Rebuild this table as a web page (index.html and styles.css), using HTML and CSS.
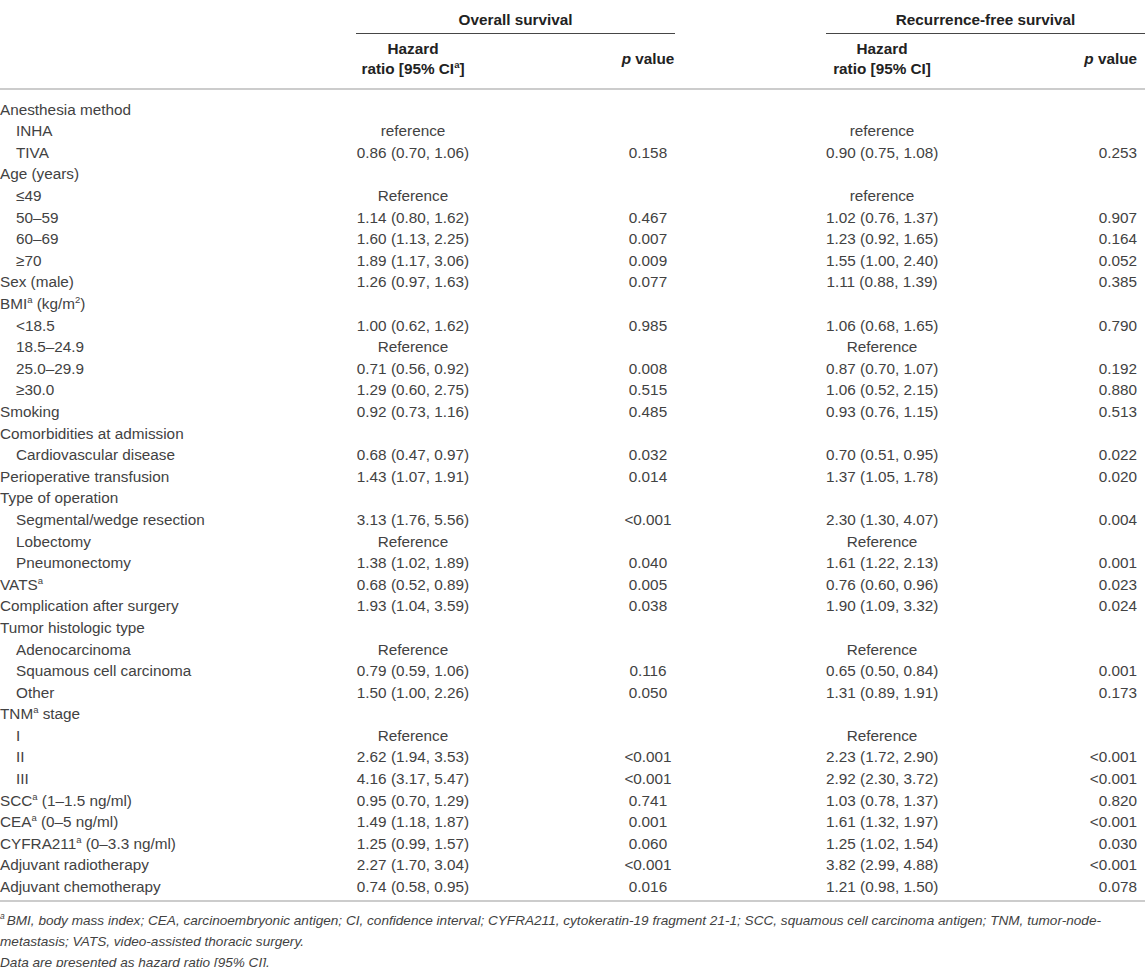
FILE: index.html
```html
<!DOCTYPE html>
<html>
<head>
    <meta charset="utf-8">
    <link rel="stylesheet" href="styles.css">
</head>
<body>
    <div id="content">
        <table class="results">
            <colgroup>
                <col class="col-label">
                <col class="col-hr1">
                <col class="col-p1">
                <col class="col-hr2">
                <col class="col-p2">
            </colgroup>
            <thead>
                <tr class="group-row">
                    <th></th>
                    <th colspan="2"><div class="group-title">Overall survival</div></th>
                    <th colspan="2" class="group-right"><div class="group-title">Recurrence-free survival</div></th>
                </tr>
                <tr class="sub-row">
                    <th></th>
                    <th class="hr">Hazard<br>ratio [95% CI<sup>a</sup>]</th>
                    <th class="p1"><i>p</i> value</th>
                    <th class="hr2">Hazard<br>ratio [95% CI]</th>
                    <th class="p2"><i>p</i> value</th>
                </tr>
            </thead>
            <tbody>
                <tr><td class="label">Anesthesia method</td><td></td><td></td><td></td><td></td></tr>
                <tr><td class="label sub">INHA</td><td class="hr">reference</td><td class="p1"></td><td class="hr2">reference</td><td class="p2"></td></tr>
                <tr><td class="label sub">TIVA</td><td class="hr">0.86 (0.70, 1.06)</td><td class="p1">0.158</td><td class="hr2">0.90 (0.75, 1.08)</td><td class="p2">0.253</td></tr>
                <tr><td class="label">Age (years)</td><td></td><td></td><td></td><td></td></tr>
                <tr><td class="label sub">≤49</td><td class="hr">Reference</td><td class="p1"></td><td class="hr2">reference</td><td class="p2"></td></tr>
                <tr><td class="label sub">50–59</td><td class="hr">1.14 (0.80, 1.62)</td><td class="p1">0.467</td><td class="hr2">1.02 (0.76, 1.37)</td><td class="p2">0.907</td></tr>
                <tr><td class="label sub">60–69</td><td class="hr">1.60 (1.13, 2.25)</td><td class="p1">0.007</td><td class="hr2">1.23 (0.92, 1.65)</td><td class="p2">0.164</td></tr>
                <tr><td class="label sub">≥70</td><td class="hr">1.89 (1.17, 3.06)</td><td class="p1">0.009</td><td class="hr2">1.55 (1.00, 2.40)</td><td class="p2">0.052</td></tr>
                <tr><td class="label">Sex (male)</td><td class="hr">1.26 (0.97, 1.63)</td><td class="p1">0.077</td><td class="hr2">1.11 (0.88, 1.39)</td><td class="p2">0.385</td></tr>
                <tr><td class="label">BMI<sup>a</sup> (kg/m<sup>2</sup>)</td><td></td><td></td><td></td><td></td></tr>
                <tr><td class="label sub">&lt;18.5</td><td class="hr">1.00 (0.62, 1.62)</td><td class="p1">0.985</td><td class="hr2">1.06 (0.68, 1.65)</td><td class="p2">0.790</td></tr>
                <tr><td class="label sub">18.5–24.9</td><td class="hr">Reference</td><td class="p1"></td><td class="hr2">Reference</td><td class="p2"></td></tr>
                <tr><td class="label sub">25.0–29.9</td><td class="hr">0.71 (0.56, 0.92)</td><td class="p1">0.008</td><td class="hr2">0.87 (0.70, 1.07)</td><td class="p2">0.192</td></tr>
                <tr><td class="label sub">≥30.0</td><td class="hr">1.29 (0.60, 2.75)</td><td class="p1">0.515</td><td class="hr2">1.06 (0.52, 2.15)</td><td class="p2">0.880</td></tr>
                <tr><td class="label">Smoking</td><td class="hr">0.92 (0.73, 1.16)</td><td class="p1">0.485</td><td class="hr2">0.93 (0.76, 1.15)</td><td class="p2">0.513</td></tr>
                <tr><td class="label">Comorbidities at admission</td><td></td><td></td><td></td><td></td></tr>
                <tr><td class="label sub">Cardiovascular disease</td><td class="hr">0.68 (0.47, 0.97)</td><td class="p1">0.032</td><td class="hr2">0.70 (0.51, 0.95)</td><td class="p2">0.022</td></tr>
                <tr><td class="label">Perioperative transfusion</td><td class="hr">1.43 (1.07, 1.91)</td><td class="p1">0.014</td><td class="hr2">1.37 (1.05, 1.78)</td><td class="p2">0.020</td></tr>
                <tr><td class="label">Type of operation</td><td></td><td></td><td></td><td></td></tr>
                <tr><td class="label sub">Segmental/wedge resection</td><td class="hr">3.13 (1.76, 5.56)</td><td class="p1">&lt;0.001</td><td class="hr2">2.30 (1.30, 4.07)</td><td class="p2">0.004</td></tr>
                <tr><td class="label sub">Lobectomy</td><td class="hr">Reference</td><td class="p1"></td><td class="hr2">Reference</td><td class="p2"></td></tr>
                <tr><td class="label sub">Pneumonectomy</td><td class="hr">1.38 (1.02, 1.89)</td><td class="p1">0.040</td><td class="hr2">1.61 (1.22, 2.13)</td><td class="p2">0.001</td></tr>
                <tr><td class="label">VATS<sup>a</sup></td><td class="hr">0.68 (0.52, 0.89)</td><td class="p1">0.005</td><td class="hr2">0.76 (0.60, 0.96)</td><td class="p2">0.023</td></tr>
                <tr><td class="label">Complication after surgery</td><td class="hr">1.93 (1.04, 3.59)</td><td class="p1">0.038</td><td class="hr2">1.90 (1.09, 3.32)</td><td class="p2">0.024</td></tr>
                <tr><td class="label">Tumor histologic type</td><td></td><td></td><td></td><td></td></tr>
                <tr><td class="label sub">Adenocarcinoma</td><td class="hr">Reference</td><td class="p1"></td><td class="hr2">Reference</td><td class="p2"></td></tr>
                <tr><td class="label sub">Squamous cell carcinoma</td><td class="hr">0.79 (0.59, 1.06)</td><td class="p1">0.116</td><td class="hr2">0.65 (0.50, 0.84)</td><td class="p2">0.001</td></tr>
                <tr><td class="label sub">Other</td><td class="hr">1.50 (1.00, 2.26)</td><td class="p1">0.050</td><td class="hr2">1.31 (0.89, 1.91)</td><td class="p2">0.173</td></tr>
                <tr><td class="label">TNM<sup>a</sup> stage</td><td></td><td></td><td></td><td></td></tr>
                <tr><td class="label sub">I</td><td class="hr">Reference</td><td class="p1"></td><td class="hr2">Reference</td><td class="p2"></td></tr>
                <tr><td class="label sub">II</td><td class="hr">2.62 (1.94, 3.53)</td><td class="p1">&lt;0.001</td><td class="hr2">2.23 (1.72, 2.90)</td><td class="p2">&lt;0.001</td></tr>
                <tr><td class="label sub">III</td><td class="hr">4.16 (3.17, 5.47)</td><td class="p1">&lt;0.001</td><td class="hr2">2.92 (2.30, 3.72)</td><td class="p2">&lt;0.001</td></tr>
                <tr><td class="label">SCC<sup>a</sup> (1–1.5 ng/ml)</td><td class="hr">0.95 (0.70, 1.29)</td><td class="p1">0.741</td><td class="hr2">1.03 (0.78, 1.37)</td><td class="p2">0.820</td></tr>
                <tr><td class="label">CEA<sup>a</sup> (0–5 ng/ml)</td><td class="hr">1.49 (1.18, 1.87)</td><td class="p1">0.001</td><td class="hr2">1.61 (1.32, 1.97)</td><td class="p2">&lt;0.001</td></tr>
                <tr><td class="label">CYFRA211<sup>a</sup> (0–3.3 ng/ml)</td><td class="hr">1.25 (0.99, 1.57)</td><td class="p1">0.060</td><td class="hr2">1.25 (1.02, 1.54)</td><td class="p2">0.030</td></tr>
                <tr><td class="label">Adjuvant radiotherapy</td><td class="hr">2.27 (1.70, 3.04)</td><td class="p1">&lt;0.001</td><td class="hr2">3.82 (2.99, 4.88)</td><td class="p2">&lt;0.001</td></tr>
                <tr><td class="label">Adjuvant chemotherapy</td><td class="hr">0.74 (0.58, 0.95)</td><td class="p1">0.016</td><td class="hr2">1.21 (0.98, 1.50)</td><td class="p2">0.078</td></tr>
            </tbody>
        </table>
        <div class="notes">
            <p><sup class="note-mark">a</sup>BMI, body mass index; CEA, carcinoembryonic antigen; CI, confidence interval; CYFRA211, cytokeratin-19 fragment 21-1; SCC, squamous cell carcinoma antigen; TNM, tumor-node-metastasis; VATS, video-assisted thoracic surgery.</p>
            <p>Data are presented as hazard ratio [95% CI].</p>
        </div>
    </div>
</body>
</html>
```

FILE: styles.css
```css
body{
    margin: 0;
    background-color: white;
    font-family: "Liberation Sans", Arial, sans-serif;
    color: rgb(66, 66, 66);
}

#content{
    width: 1145px;
}

.results{
    width: 1145px;
    table-layout: fixed;
    border-collapse: collapse;
    font-size: 15.3px;
}

.col-label{ width: 356px; }
.col-hr1{ width: 114px; }
.col-p1{ width: 205px; }
.col-hr2{ width: 263px; }
.col-p2{ width: 207px; }

th, td{
    padding: 0;
    font-weight: normal;
}

sup{
    font-size: 0.62em;
    line-height: 0;
}

/* header */
th{
    color: rgb(34, 34, 34);
    font-weight: bold;
    white-space: nowrap;
}

.group-row th{
    padding-top: 9px;
    text-align: center;
}

.group-title{
    line-height: 21.6px;
    padding-bottom: 2.4px;
    border-bottom: 1.5px solid rgb(70, 70, 70);
}

.group-right{
    padding-left: 151px;
}

.sub-row th{
    line-height: 20px;
    padding-top: 5.5px;
    padding-bottom: 9px;
    border-bottom: 2px solid rgb(204, 204, 204);
}

/* body */
td{
    line-height: 21.6px;
    white-space: nowrap;
}

tbody tr:first-child td{
    padding-top: 8.2px;
}

tbody tr:last-child td{
    padding-bottom: 2px;
    border-bottom: 2px solid rgb(204, 204, 204);
}

.sub{
    padding-left: 16px;
}

.hr{
    text-align: center;
}

.p1{
    text-align: center;
    padding-left: 151px;
}

.hr2{
    text-align: center;
    padding-left: 151px;
}

.p2{
    text-align: right;
    padding-right: 8px;
}

/* footnotes */
.notes{
    margin-top: 8px;
    font-style: italic;
    font-size: 13.6px;
    line-height: 21px;
}

.notes p{
    margin: 0;
}

.note-mark{
    display: inline-block;
    margin-right: 2px;
    vertical-align: top;
    line-height: 12px;
}
```
